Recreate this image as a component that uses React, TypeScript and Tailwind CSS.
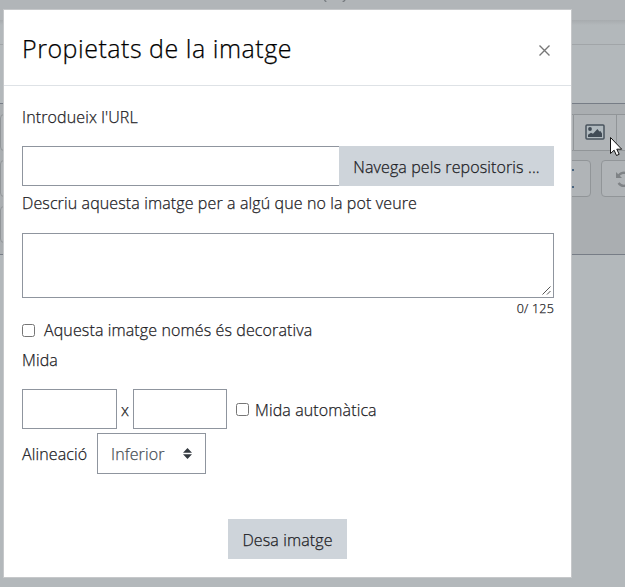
import React from "react";

function Checkbox({ className = "" }: { className?: string }) {
  return (
    <input
      type="checkbox"
      className={`m-0 h-[13px] w-[13px] shrink-0 appearance-none rounded-[2.5px] border border-[#767676] bg-white ${className}`}
    />
  );
}

function PageBehind() {
  return (
    <div className="flex h-[587px] w-full flex-col bg-[#b3b8bb]">
      <div className="h-5 shrink-0 bg-[#b1b5b8] pl-[324px]">
        <svg width="22" height="2" viewBox="0 0 22 2" className="block" fill="none" stroke="#72777b" strokeWidth="1.2">
          <path d="M.6 0q.2 1.3 1.8 1.5M21 0q-.2 1.3-2.4 1.5" />
        </svg>
      </div>
      <div className="h-[5px] shrink-0 bg-linear-to-b from-[#a7abae] to-[#b3b8bb]" />
      <div className="h-5 shrink-0 border-b border-[#a1a5a8]" />
      <div className="h-[58px] shrink-0" />
      <div className="flex h-[152px] shrink-0 flex-col gap-[9px] border-y border-[#777d86] bg-[#aaaeb1] pt-[10px]">
        <div className="flex h-[37px] shrink-0">
          <div className="w-[574px] shrink-0 rounded-l border border-[#919598] bg-[#b0b4b7]" />
          <div className="flex w-[43px] shrink-0 items-center justify-center border-y border-r border-[#919598] bg-[#b0b4b7]">
            <svg width="20" height="16" viewBox="0 0 20 16" className="-mt-[2px]">
              <rect x="1" y="1" width="18" height="14" rx="1" fill="#b0b9be" stroke="#48535d" strokeWidth="1.5" />
              <circle cx="5" cy="5" r="1.9" fill="#414b55" />
              <path d="M3 13v-2.2L6 8.8l2 1L12.4 5l2 2.6 1-.6L17 9.5V13z" fill="#414b55" />
            </svg>
          </div>
          <div className="w-10 shrink-0 border-y border-[#919598] bg-[#b0b4b7]" />
        </div>
        <div className="flex h-[37px] shrink-0 gap-[10px]">
          <div className="flex w-[591px] shrink-0 items-center justify-end rounded border border-[#919598] bg-[#b0b4b7] pr-[16px]">
            <div className="flex h-[19px] w-2 flex-col justify-between">
              <div className="h-[2px] bg-[#47637e]" />
              <div className="h-[2px] bg-[#47637e]" />
            </div>
          </div>
          <div className="flex w-12 shrink-0 items-center rounded border border-[#919598] bg-[#b0b4b7] pl-[13px]">
            <svg width="18" height="18" viewBox="0 0 18 18" fill="none" stroke="#7f8386" strokeWidth="2.3">
              <path d="M3 6.5C5 2.5 10 1.5 13.5 4.5S16 14 11 15.5C8 16.5 5 15 3.5 13" />
              <path d="M1 2v6h6z" fill="#7f8386" stroke="none" />
            </svg>
          </div>
        </div>
        <div className="h-[37px] w-[300px] shrink-0 rounded border border-[#919598] bg-[#b0b4b7]" />
      </div>
    </div>
  );
}

function Dialog() {
  return (
    <section className="absolute top-[9px] left-[3px] flex h-[569px] w-[569px] flex-col border border-[#c6c8ca] bg-white">
      <header className="flex h-[76px] shrink-0 items-center justify-between border-b border-[#dee2e6] pr-5 pl-[18px]">
        <h1 className="pt-px text-[25px] tracking-[0.52px] whitespace-nowrap text-black">Propietats de la imatge</h1>
        <button className="pt-[5px]">
          <svg width="13" height="13" viewBox="0 0 13 13" stroke="#777" strokeWidth="1.4">
            <path d="M1.5 1.5l10 10M11.5 1.5l-10 10" />
          </svg>
        </button>
      </header>
      <div className="flex flex-col pr-[17px] pl-[18px]">
        <label className="mt-[19px] h-6">Introdueix l'URL</label>
        <div className="mt-[17px] flex h-10">
          <input className="w-[317px] border border-r-0 border-[#8f959e] bg-white" />
          <button className="flex-1 bg-[#ced4da] pt-[2px] whitespace-nowrap">Navega pels repositoris ...</button>
        </div>
        <label className="mt-[5px] h-6">Descriu aquesta imatge per a algú que no la pot veure</label>
        <div className="mt-[18px] flex h-[65px] items-end justify-end border border-[#8f959e] bg-white pr-[2px] pb-[2px]">
          <svg width="9" height="9" viewBox="0 0 9 9" stroke="#555" strokeWidth="1">
            <path d="M.5 8.5l8-8M5 8.5l3.5-3.5" />
          </svg>
        </div>
        <div className="mt-[2px] h-[18px] text-right text-[12.5px] leading-[18px] tracking-[0.2px]">0/ 125</div>
        <label className="flex h-6 items-center">
          <Checkbox className="mr-[9px]" />
          Aquesta imatge només és decorativa
        </label>
        <div className="mt-[6px] h-6">Mida</div>
        <div className="mt-[17px] flex h-10 items-center">
          <input className="h-10 w-[95px] border border-[#8f959e] bg-white" />
          <span className="w-4 pt-px text-center">x</span>
          <input className="mr-[9px] h-10 w-[94px] border border-[#8f959e] bg-white" />
          <label className="flex items-center">
            <Checkbox className="mr-[6px]" />
            <span className="pt-px">Mida automàtica</span>
          </label>
        </div>
        <div className="mt-1 flex h-[41px] items-center">
          <span className="w-[75px]">Alineació</span>
          <button className="flex h-[41px] w-[109px] items-center justify-between border border-[#8f959e] bg-white pr-[13px] pl-[13px] text-[#495057]">
            Inferior
            <svg width="9" height="11" viewBox="0 0 9 11" fill="#343a40">
              <path d="M0 4.8L4.5 0 9 4.8zM0 6.2h9L4.5 11z" />
            </svg>
          </button>
        </div>
        <button className="mt-[45px] ml-[206px] h-10 w-[119px] bg-[#ced4da] pt-[2px] whitespace-nowrap">Desa imatge</button>
      </div>
    </section>
  );
}

export default function App() {
  return (
    <main className="relative h-[587px] w-[625px] overflow-hidden font-['Open_Sans','Noto_Sans',sans-serif] text-[16px] leading-6 font-light tracking-[0.12px] text-[#1d2125] [-webkit-text-stroke:0.25px_currentColor]">
      <PageBehind />
      <Dialog />
      <svg className="absolute top-[136px] left-[609px]" width="14" height="21" viewBox="0 0 14 21">
        <path d="M1.5 1.5v16l3.6-3.3 2.4 5.3 2.7-1.2-2.4-5.1h4.9z" fill="#fff" stroke="#111" strokeWidth="1" />
      </svg>
    </main>
  );
}
